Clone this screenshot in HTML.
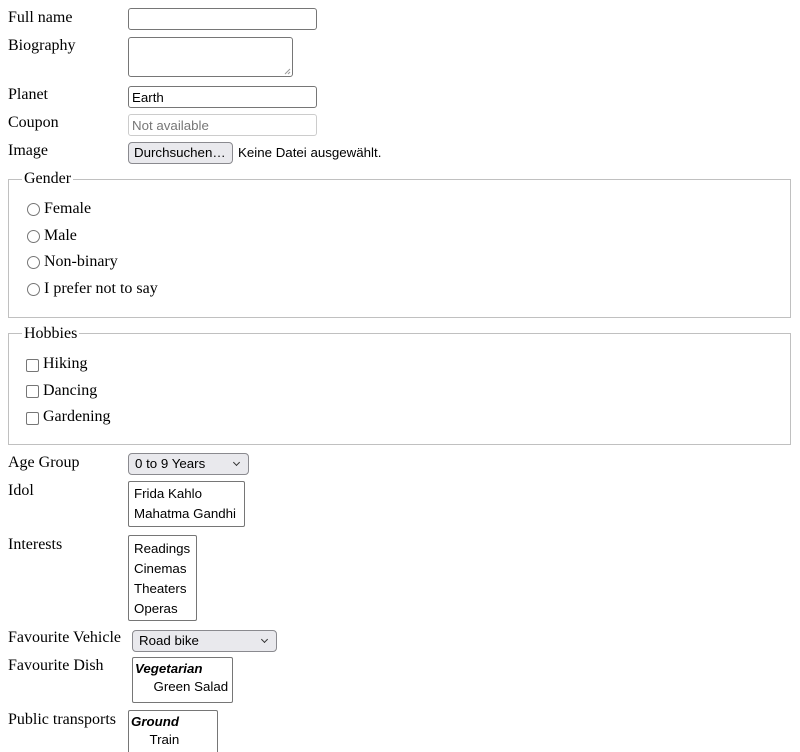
<!DOCTYPE html>
<html><head><style>
html,body{margin:0;height:752px;overflow:hidden}
body{width:800px;background:#fff;font-family:"Liberation Serif",serif;font-size:16px;color:#000;position:relative}
.a{position:absolute}
.l{position:absolute;left:8px;line-height:18px}
.box{position:absolute;border:1px solid #767676;border-radius:3px;box-sizing:border-box;font-family:"Liberation Sans",sans-serif;font-size:13.3px;background:#fff}
.btn,.sel{position:absolute;border:1px solid #8a8a8f;border-radius:4px;box-sizing:border-box;background:#e9e9ed;font-family:"Liberation Sans",sans-serif;font-size:13.3px;padding:2px 6px;line-height:15px}
.sel:after{content:"";position:absolute;right:9px;top:6px;width:4px;height:4px;border-right:1.3px solid #333;border-bottom:1.3px solid #333;transform:rotate(45deg)}
.lb{position:absolute;border:1px solid #767676;border-radius:2px;box-sizing:border-box;font-family:"Liberation Sans",sans-serif;font-size:13.3px;line-height:20px;padding:1px 5px;background:#fff;overflow:hidden}
.fs{position:absolute;left:8px;width:783px;border:1px solid #c0c0c0;border-top:none;box-sizing:border-box}
.lg{position:absolute;background:#fff;padding:0 2px;line-height:18px}
.r{position:absolute;left:27px;width:13px;height:13px;border:1px solid #767676;border-radius:50%;box-sizing:border-box}
.c{position:absolute;left:26px;width:13px;height:13px;border:1px solid #767676;border-radius:2px;box-sizing:border-box}
</style></head><body>
<div class="l" style="top:9px">Full name</div>
<div class="box" style="left:128px;top:8px;width:189px;height:22px"></div>
<div class="l" style="top:37px">Biography</div>
<div class="box" style="left:128px;top:37px;width:165px;height:40px"><svg class="a" style="right:1px;bottom:1px" width="7" height="7"><path d="M6 1L1 6M6 4L4 6" stroke="#999" stroke-width="1"/></svg></div>
<div class="l" style="top:86px">Planet</div>
<div class="box" style="left:128px;top:86px;width:189px;height:22px;padding:3px 3px;line-height:15px">Earth</div>
<div class="l" style="top:114px">Coupon</div>
<div class="box" style="left:128px;top:114px;width:189px;height:22px;padding:3px 3px;line-height:15px;color:#777;border-color:#ccc">Not available</div>
<div class="l" style="top:142px">Image</div>
<div class="btn" style="left:128px;top:142px;width:105px;height:22px;padding:2px 5px;line-height:16px;white-space:nowrap;overflow:hidden">Durchsuchen…</div>
<div class="a" style="left:238px;top:145px;font-family:'Liberation Sans',sans-serif;font-size:13.3px">Keine Datei ausgewählt.</div>

<div class="fs" style="top:179px;height:139px"></div>
<div class="a" style="left:8px;top:179px;width:783px;border-top:1px solid #c0c0c0"></div>
<div class="lg" style="left:22px;top:170px">Gender</div>
<div class="r" style="top:203px"></div><div class="a" style="left:44px;top:200px">Female</div>
<div class="r" style="top:230px"></div><div class="a" style="left:44px;top:227px">Male</div>
<div class="r" style="top:256px"></div><div class="a" style="left:44px;top:253px">Non-binary</div>
<div class="r" style="top:283px"></div><div class="a" style="left:44px;top:280px">I prefer not to say</div>

<div class="fs" style="top:333px;height:112px"></div>
<div class="a" style="left:8px;top:333px;width:783px;border-top:1px solid #c0c0c0"></div>
<div class="lg" style="left:22px;top:325px">Hobbies</div>
<div class="c" style="top:359px"></div><div class="a" style="left:43px;top:355px">Hiking</div>
<div class="c" style="top:385px"></div><div class="a" style="left:43px;top:382px">Dancing</div>
<div class="c" style="top:412px"></div><div class="a" style="left:43px;top:408px">Gardening</div>

<div class="l" style="top:454px">Age Group</div>
<div class="sel" style="left:128px;top:453px;width:121px;height:22px">0 to 9 Years</div>
<div class="l" style="top:482px">Idol</div>
<div class="lb" style="left:128px;top:481px;width:117px;height:46px;padding-top:2px">Frida Kahlo<br>Mahatma Gandhi</div>
<div class="l" style="top:536px">Interests</div>
<div class="lb" style="left:128px;top:535px;width:69px;height:86px;padding-top:3px">Readings<br>Cinemas<br>Theaters<br>Operas</div>
<div class="l" style="top:629px">Favourite Vehicle</div>
<div class="sel" style="left:132px;top:630px;width:145px;height:22px">Road bike</div>
<div class="l" style="top:657px">Favourite Dish</div>
<div class="lb" style="left:132px;top:657px;width:101px;height:46px;line-height:18px;padding:2px 2px"><b><i>Vegetarian</i></b><br>&nbsp;&nbsp;&nbsp;&nbsp;&nbsp;Green Salad</div>
<div class="l" style="top:711px">Public transports</div>
<div class="lb" style="left:128px;top:710px;width:90px;height:60px;line-height:18px;padding:2px 2px"><b><i>Ground</i></b><br>&nbsp;&nbsp;&nbsp;&nbsp;&nbsp;Train</div>
</body></html>
